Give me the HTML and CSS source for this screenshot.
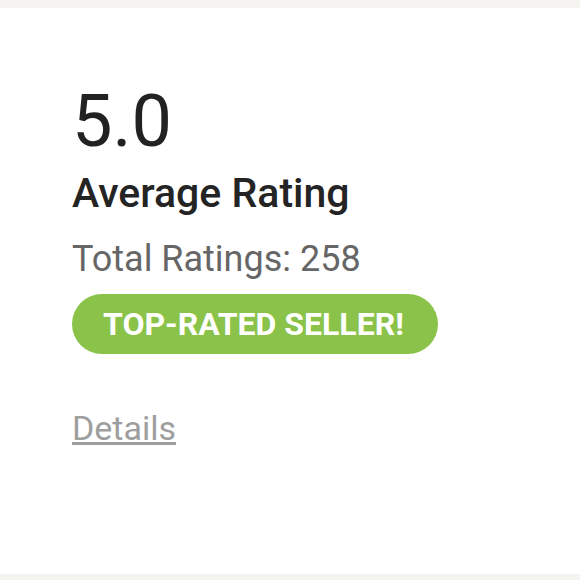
FILE: index.html
```html
<!DOCTYPE html>
<html lang="en">
<head>
<meta charset="utf-8">
<title>Rating</title>
<link rel="stylesheet" href="styles.css">
</head>
<body>
<main class="card">
  <section class="rating">
    <div class="score">5.0</div>
    <h2 class="title">Average Rating</h2>
    <p class="total">Total Ratings: 258</p>
    <div class="badge-row"><span class="badge">TOP-RATED SELLER!</span></div>
    <a class="details" href="#">Details</a>
  </section>
</main>
</body>
</html>
```
FILE: styles.css
```css
html, body {
  margin: 0;
  padding: 0;
}
body {
  background: #f6f4f0;
  font-family: Roboto, "Noto Sans", Arial, sans-serif;
  width: 580px;
  height: 580px;
  overflow: hidden;
}
.card {
  margin-top: 8px;
  height: 566px;
  background: #ffffff;
  box-sizing: border-box;
  padding: 78px 0 0 72px;
}
.rating {
  display: flex;
  flex-direction: column;
  align-items: flex-start;
}
.score {
  font-size: 72px;
  line-height: 72px;
  color: #222222;
  font-weight: 400;
}
.title {
  margin: 15px 0 0;
  font-size: 41px;
  line-height: 41px;
  font-weight: 500;
  color: #242424;
}
.total {
  margin: 27px 0 0;
  font-size: 36px;
  line-height: 36px;
  color: #666666;
}
.badge-row {
  margin-top: 17px;
}
.badge {
  display: inline-block;
  height: 60px;
  line-height: 60px;
  padding: 0 34px 0 31px;
  border-radius: 30px;
  background: #8bc34a;
  color: #ffffff;
  font-size: 32px;
  font-weight: 700;
}
.details {
  margin-top: 57px;
  font-size: 34px;
  line-height: 34px;
  color: #9e9e9e;
  text-decoration: underline;
}
```
